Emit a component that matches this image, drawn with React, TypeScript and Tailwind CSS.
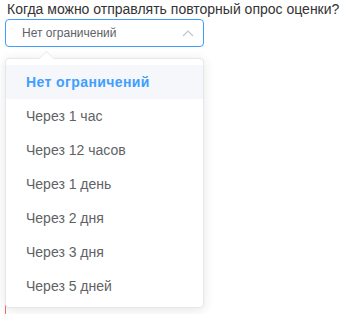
import { useState } from "react";

const options = [
  "Нет ограничений",
  "Через 1 час",
  "Через 12 часов",
  "Через 1 день",
  "Через 2 дня",
  "Через 3 дня",
  "Через 5 дней",
];

export default function App() {
  const [value] = useState(options[0]);

  return (
    <div className="relative h-[314px] w-[345px] overflow-hidden bg-white font-['Liberation_Sans',Arial,sans-serif]">
      {/* label */}
      <p className="pl-[7px] text-[14px] leading-[19px] text-[#333333]">
        Когда можно отправлять повторный опрос оценки?
      </p>

      {/* select */}
      <div className="ml-[5px] flex h-[28px] w-[199px] items-center justify-between rounded-[4px] border border-[#409eff] pl-[16px] pr-[9px]">
        <span className="text-[12px] text-[#606266]">{value}</span>
        <svg width="12" height="8" viewBox="0 0 12 8" fill="none" className="text-[#c0c4cc]">
          <path d="M1 7 L6 2 L11 7" stroke="currentColor" strokeWidth="1.1" />
        </svg>
      </div>

      {/* field underneath, partly hidden by the dropdown */}
      <div className="ml-[5px] mt-[254px] h-[40px] w-[199px] border-l border-[#f56c6c]" />

      {/* dropdown */}
      <div className="absolute left-[5px] top-[58px] w-[199px] rounded-[4px] border border-[#e4e7ed] bg-white pb-[4px] pt-[6px] shadow-[0_2px_12px_rgba(0,0,0,0.1)]">
        <div className="absolute left-[35px] top-[-6px] h-[11px] w-[11px] rotate-45 border-l border-t border-[#ebeef5] bg-white" />
        <ul className="relative">
          {options.map((o) => (
            <li
              key={o}
              className={
                o === value
                  ? "flex h-[34px] items-center bg-[#f5f7fa] px-[20px] text-[14px] font-bold tracking-[0.4px] text-[#409eff]"
                  : "flex h-[34px] items-center px-[20px] text-[14px] text-[#606266]"
              }
            >
              {o}
            </li>
          ))}
        </ul>
      </div>
    </div>
  );
}
